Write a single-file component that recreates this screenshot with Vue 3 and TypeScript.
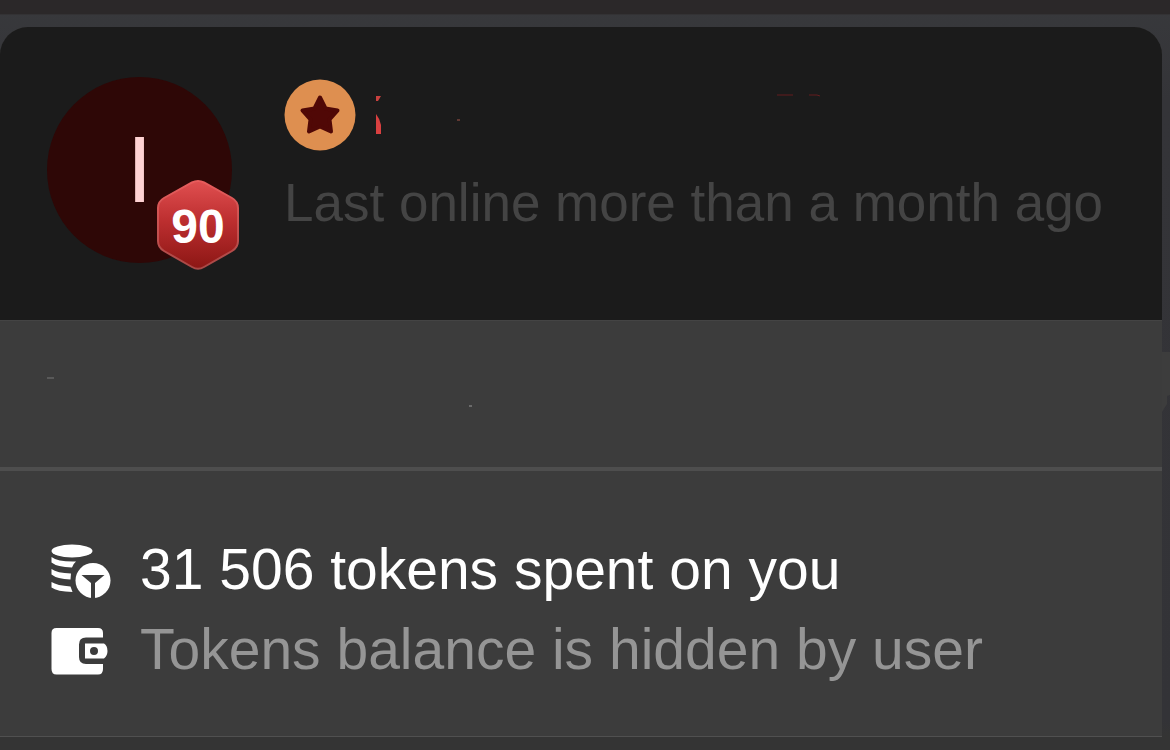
<script setup lang="ts">
interface Profile {
  initial: string
  level: number
  lastOnline: string
  spent: string
  balance: string
}

const profile: Profile = {
  initial: 'I',
  level: 90,
  lastOnline: 'Last online more than a month ago',
  spent: '31 506 tokens spent on you',
  balance: 'Tokens balance is hidden by user',
}
</script>

<template>
  <div class="screen">
    <div class="top-strip"></div>
    <main class="card">
      <header class="head">
        <div class="avatar">
          <span class="initial">{{ profile.initial }}</span>
          <div class="level">
            <svg class="hexagon" viewBox="0 0 84 92" aria-hidden="true">
              <defs>
                <linearGradient id="level-fill" x1="0" y1="0" x2="0" y2="1">
                  <stop offset="0" stop-color="#e04f50" />
                  <stop offset="0.45" stop-color="#bd2f30" />
                  <stop offset="1" stop-color="#8c1614" />
                </linearGradient>
                <linearGradient id="level-edge" x1="0" y1="0" x2="0" y2="1">
                  <stop offset="0" stop-color="#e85c5c" />
                  <stop offset="1" stop-color="#a84846" />
                </linearGradient>
              </defs>
              <path
                d="M36 3.500Q42 0.500 48 3.500L76 19Q82 22.500 82 29V62Q82 68.500 76 72L48 88Q42 91.500 36 88L8 72Q2 68.500 2 62V29Q2 22.500 8 19Z"
                fill="url(#level-fill)" stroke="url(#level-edge)" stroke-width="2"
              />
            </svg>
            <span class="level-number">{{ profile.level }}</span>
          </div>
        </div>
        <div class="identity">
          <div class="name-row">
            <svg class="star" viewBox="0 0 72 72" aria-hidden="true">
              <circle cx="36" cy="36" r="35.500" fill="#de8f50" />
              <path
                d="M36 18.500L41.500 29.500L53.500 31.500L45.500 40.500L47 52.500L36 47.500L25 52.500L26.500 40.500L18.500 31.500L30.500 29.500Z"
                fill="#500806" stroke="#500806" stroke-width="4" stroke-linejoin="round"
              />
            </svg>
            <svg class="name-marks" viewBox="0 0 480 72" aria-hidden="true">
              <path d="M0 17H5L2 22H0Z" fill="#c9413f" />
              <path d="M0 35Q4 40 5 46V55H0Z" fill="#d94040" />
              <path d="M81 41H84" stroke="#a5574a" />
              <path d="M401 16H417M433 16H441L444 17" fill="none" stroke="#651d1e" />
            </svg>
          </div>
          <p class="last-online">{{ profile.lastOnline }}</p>
        </div>
      </header>
      <section class="note">
        <svg class="note-marks" viewBox="0 0 430 40" aria-hidden="true">
          <path d="M1 6H8" stroke="#777" />
          <path d="M423 34H426" stroke="#999" />
        </svg>
      </section>
      <ul class="stats">
        <li class="stat">
          <svg class="stat-icon" viewBox="0 0 62 56" fill="#fff" aria-hidden="true">
            <ellipse cx="22" cy="8" rx="20.500" ry="6.500" />
            <path d="M1.500 14Q8 19 26 18.500Q23 21 22 24.500Q7 24 1.500 19.500Z" />
            <path d="M1.500 26Q7 30 21 30.500L20.500 36.500Q7 36 1.500 31.500Z" />
            <path d="M1.500 39Q7 42.500 20.500 43.500L22.500 49Q7 48.500 1.500 44.500Z" />
            <circle cx="43" cy="37.500" r="17.500" />
            <path d="M31.500 32H54.500L45 40V56H41V40Z" fill="#3c3c3c" />
          </svg>
          <span class="stat-text">{{ profile.spent }}</span>
        </li>
        <li class="stat muted">
          <svg class="stat-icon" viewBox="0 0 62 56" fill="#fff" aria-hidden="true">
            <path d="M6.500 5H48Q53 5 53 10V14.500H36Q29 14.500 29 21.500V34Q29 41 36 41H53V46Q53 51.500 48 51.500H6.500Q1.500 51.500 1.500 46V10Q1.500 5 6.500 5Z" />
            <path
              fill-rule="evenodd"
              d="M35 20.500H54Q57.500 22.500 57.500 28Q57.500 33 54 35.500H35ZM44 24A4 4 0 1 0 44 32A4 4 0 1 0 44 24Z"
            />
          </svg>
          <span class="stat-text">{{ profile.balance }}</span>
        </li>
      </ul>
    </main>
    <svg class="edge-tab" viewBox="0 0 8 60" aria-hidden="true">
      <path d="M0 0H8V43L5 44V52L0 60Z" fill="#3d3d3d" />
    </svg>
  </div>
</template>

<style>
body {
  margin: 0;
  background: #343434;
}
</style>

<style scoped>
.screen {
  position: relative;
  display: flex;
  flex-direction: column;
  min-height: 100vh;
  box-sizing: border-box;
  padding-bottom: 13px;
  background: linear-gradient(#38393c, #343438 100px, #333337 720px, #343434 736px);
  font-family: "Liberation Sans", Arial, sans-serif;
}

.top-strip {
  height: 14px;
  background: #2b2829;
  border-bottom: 1px solid #333234;
}

.card {
  flex: 1;
  display: flex;
  flex-direction: column;
  margin: 12px 8px 0 0;
  border-bottom: 1px solid #505050;
  border-radius: 28px 28px 0 0;
  overflow: hidden;
  background: #3c3c3c;
}

.edge-tab {
  position: absolute;
  top: 352px;
  right: 0;
  width: 8px;
  height: 60px;
}

.head {
  display: flex;
  gap: 52px;
  padding: 50px 47px 57px;
  background: #1b1b1b;
  border-bottom: 1px solid #444;
}

.avatar {
  position: relative;
  display: flex;
  align-items: center;
  justify-content: center;
  flex: none;
  width: 185px;
  height: 186px;
  border-radius: 50%;
  background: #2e0706;
}

.initial {
  color: #ffd2d3;
  font-size: 94px;
  line-height: 94px;
}

.level {
  position: absolute;
  right: -8px;
  bottom: -8px;
  display: flex;
  align-items: center;
  justify-content: center;
  width: 84px;
  height: 92px;
}

.hexagon {
  position: absolute;
  inset: 0;
}

.level-number {
  position: relative;
  padding-top: 4px;
  color: #fff;
  font-size: 48px;
  font-weight: 700;
  line-height: 48px;
}

.identity {
  flex: 1;
  min-width: 0;
}

.name-row {
  display: flex;
  gap: 20px;
  padding-top: 2px;
}

.star {
  flex: none;
  width: 72px;
  height: 72px;
}

.name-marks {
  flex: none;
  width: 480px;
  height: 72px;
}

.last-online {
  margin: 22px 0 0;
  color: #444;
  font-size: 53px;
  line-height: 60px;
  white-space: nowrap;
}

.note {
  height: 146px;
  border-bottom: 4px solid #4e4e4e;
}

.note-marks {
  display: block;
  width: 430px;
  height: 40px;
  margin: 51px 0 0 46px;
}

.stats {
  display: flex;
  flex-direction: column;
  gap: 20px;
  margin: 0;
  padding: 70px 50px 40px;
  list-style: none;
}

.stat {
  display: flex;
  align-items: center;
  gap: 28px;
  color: #fff;
  font-size: 57px;
  line-height: 56px;
  white-space: nowrap;
}

.stat-icon {
  flex: none;
  width: 62px;
  height: 56px;
}

.stat-text {
  padding-bottom: 4px;
}

.muted {
  color: #959595;
}
</style>
